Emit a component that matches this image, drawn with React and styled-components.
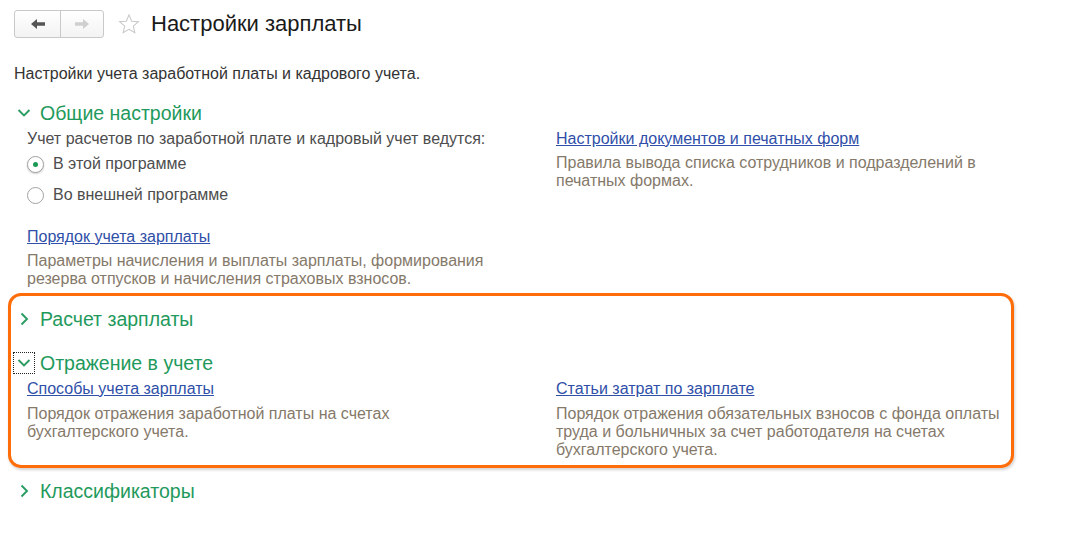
import React from "react";
import styled, { createGlobalStyle } from "styled-components";

const GlobalStyle = createGlobalStyle`
  body {
    margin: 0;
    background: #fff;
    font-family: Arial, "Liberation Sans", sans-serif;
  }
`;

const Page = styled.div`
  width: 1090px;
  height: 545px;
  box-sizing: border-box;
  padding: 10px 0 0 14px;
  color: #4d4d4d;
  font-size: 16px;
`;

const TopBar = styled.div`
  display: flex;
  align-items: center;
  height: 28px;
`;

const NavGroup = styled.div`
  display: flex;
  border: 1px solid #c9c9c9;
  border-radius: 3px;
  height: 26px;
  background: linear-gradient(#fff, #f3f3f3);
`;

const NavButton = styled.div`
  width: ${(p) => p.$w}px;
  display: flex;
  align-items: center;
  justify-content: center;
  border-left: ${(p) => (p.$divider ? "1px solid #c9c9c9" : "none")};
`;

const StarWrap = styled.div`
  margin-left: 14px;
  display: flex;
`;

const Title = styled.h1`
  margin: 0 0 0 11px;
  font-size: 22px;
  font-weight: normal;
  color: #1a1a1a;
`;

const Subtitle = styled.div`
  margin-top: 27px;
  height: 18px;
  line-height: 18px;
  color: #333;
`;

const SectionHeader = styled.div`
  display: flex;
  align-items: center;
  height: 24px;
  margin-top: ${(p) => p.$mt || 0}px;
  color: #1f9a5c;
  font-size: 19.5px;
`;

const Toggle = styled.div`
  width: 20px;
  height: 20px;
  margin: 0 6px 0 0;
  display: flex;
  align-items: center;
  justify-content: center;
  box-sizing: border-box;
  outline: ${(p) => (p.$focus ? "1px dotted #222" : "none")};
`;

const Columns = styled.div`
  display: grid;
  grid-template-columns: 529px 1fr;
  padding-left: 13px;
`;

const Column = styled.div`
  display: flex;
  flex-direction: column;
`;

const Label = styled.div`
  line-height: 18px;
  margin-top: 5px;
`;

const RadioRow = styled.label`
  display: flex;
  align-items: center;
  height: 20px;
  margin-top: ${(p) => p.$mt}px;
  color: #4d4d4d;
`;

const RadioCircle = styled.span`
  width: 15px;
  height: 15px;
  border-radius: 50%;
  border: 1px solid #a3a3a3;
  background: #fff;
  display: flex;
  align-items: center;
  justify-content: center;
  margin-right: 9px;
  box-shadow: ${(p) => (p.$checked ? "0 1px 2px rgba(0,0,0,0.2)" : "none")};
  &::after {
    content: "";
    width: 5px;
    height: 5px;
    border-radius: 50%;
    background: ${(p) => (p.$checked ? "#1a9a52" : "transparent")};
  }
`;

const Link = styled.a`
  color: #2f4fa8;
  text-decoration: underline;
  line-height: 18px;
  margin-top: ${(p) => p.$mt || 0}px;
  align-self: flex-start;
  cursor: pointer;
`;

const Note = styled.div`
  color: #85796a;
  line-height: ${(p) => p.$lh || 17.5}px;
  max-width: 466px;
  margin-top: ${(p) => p.$mt || 6}px;
`;

const Highlight = styled.div`
  margin: 6px 0 0 -6px;
  width: 1006px;
  box-sizing: border-box;
  border: 3px solid #ff6d0a;
  border-radius: 13px;
  padding: 11px 0 6px 4px;
  box-shadow: 1px 2px 3px rgba(0, 0, 0, 0.18);
`;

const HighlightInner = styled.div`
  margin-left: -1px;
`;

const Chevron = ({ open }) => (
  <svg width="14" height="14" viewBox="0 0 14 14">
    {open ? (
      <path d="M1.5 4 L7 9.5 L12.5 4" fill="none" stroke="#2a9c62" strokeWidth="1.9" />
    ) : (
      <path d="M4.5 1.5 L10 7 L4.5 12.5" fill="none" stroke="#2a9c62" strokeWidth="1.9" />
    )}
  </svg>
);

const Arrow = ({ dir, color }) => (
  <svg width="16" height="12" viewBox="0 0 16 12">
    <path
      d={
        dir === "left"
          ? "M1 6 L7 1 L7 4.3 L15 4.3 L15 7.7 L7 7.7 L7 11 Z"
          : "M15 6 L9 1 L9 4.3 L1 4.3 L1 7.7 L9 7.7 L9 11 Z"
      }
      fill={color}
    />
  </svg>
);

const Star = () => (
  <svg width="22" height="22" viewBox="0 0 24 24">
    <path
      d="M12 2 L14.9 8.9 L22.3 9.5 L16.7 14.3 L18.4 21.6 L12 17.7 L5.6 21.6 L7.3 14.3 L1.7 9.5 L9.1 8.9 Z"
      fill="none"
      stroke="#c8c8c8"
      strokeWidth="1.1"
    />
  </svg>
);

export default function App() {
  return (
    <>
      <GlobalStyle />
      <Page>
        <TopBar>
          <NavGroup>
            <NavButton $w={45}>
              <Arrow dir="left" color="#555" />
            </NavButton>
            <NavButton $w={42} $divider>
              <Arrow dir="right" color="#cfcfcf" />
            </NavButton>
          </NavGroup>
          <StarWrap>
            <Star />
          </StarWrap>
          <Title>Настройки зарплаты</Title>
        </TopBar>

        <Subtitle>Настройки учета заработной платы и кадрового учета.</Subtitle>

        <SectionHeader $mt={18}>
          <Toggle>
            <Chevron open />
          </Toggle>
          Общие настройки
        </SectionHeader>
        <Columns>
          <Column>
            <Label>Учет расчетов по заработной плате и кадровый учет ведутся:</Label>
            <RadioRow $mt={6}>
              <RadioCircle $checked />
              В этой программе
            </RadioRow>
            <RadioRow $mt={11}>
              <RadioCircle />
              Во внешней программе
            </RadioRow>
            <Link $mt={23}>Порядок учета зарплаты</Link>
            <Note>
              Параметры начисления и выплаты зарплаты, формирования резерва отпусков и начисления
              страховых взносов.
            </Note>
          </Column>
          <Column>
            <Link $mt={5}>Настройки документов и печатных форм</Link>
            <Note>Правила вывода списка сотрудников и подразделений в печатных формах.</Note>
          </Column>
        </Columns>

        <Highlight>
          <HighlightInner>
            <SectionHeader>
              <Toggle>
                <Chevron />
              </Toggle>
              Расчет зарплаты
            </SectionHeader>
            <SectionHeader $mt={20}>
              <Toggle $focus>
                <Chevron open />
              </Toggle>
              Отражение в учете
            </SectionHeader>
            <Columns>
              <Column>
                <Link $mt={5}>Способы учета зарплаты</Link>
                <Note $lh={18} $mt={7}>
                  Порядок отражения заработной платы на счетах бухгалтерского учета.
                </Note>
              </Column>
              <Column>
                <Link $mt={5}>Статьи затрат по зарплате</Link>
                <Note $lh={18} $mt={7}>
                  Порядок отражения обязательных взносов с фонда оплаты труда и больничных за
                  счет работодателя на счетах бухгалтерского учета.
                </Note>
              </Column>
            </Columns>
          </HighlightInner>
        </Highlight>

        <SectionHeader $mt={11}>
          <Toggle>
            <Chevron />
          </Toggle>
          Классификаторы
        </SectionHeader>
      </Page>
    </>
  );
}
